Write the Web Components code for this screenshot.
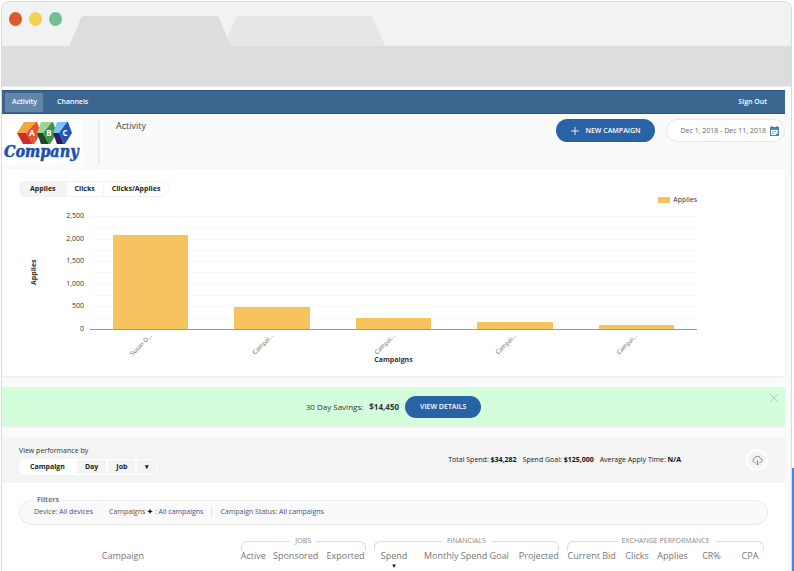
<!DOCTYPE html>
<html lang="en">
<head>
<meta charset="utf-8">
<meta name="viewport" content="width=device-width, initial-scale=1">
<title>Activity</title>
<style>
  html { background: #fff; }
  body {
    margin: 0;
    font: 7px/10px "Open Sans", "Noto Sans", sans-serif;
    color: #333;
    --blue: #2863a7;
    --nav: #3b6690;
    --panel: #fafafa;
    --amber: #f7c35f;
    --link: #3c4f9c;
  }
</style>
</head>
<body>
<browser-window>
  <site-nav></site-nav>
  <page-header></page-header>
  <chart-card></chart-card>
  <savings-banner></savings-banner>
  <performance-panel>
    <filter-bar></filter-bar>
    <results-table></results-table>
  </performance-panel>
</browser-window>
<script>
const define = (name, html) => customElements.define(name, class extends HTMLElement {
  constructor() {
    super();
    this.attachShadow({ mode: "open" }).innerHTML = html;
  }
});

const reset = `
  :host, *, *::before, *::after { box-sizing: border-box; }
  button { font: inherit; color: inherit; background: none; border: 0; margin: 0; padding: 0; cursor: pointer; white-space: nowrap; }
  a { color: inherit; text-decoration: none; }
`;

define("browser-window", `
<style>${reset}
  :host { display: block; position: relative; overflow: hidden; padding: 1px 2px 0 1px; }
  .frame { border: 1px solid #d8dada; border-bottom: 0; border-radius: 8px 8px 0 0; overflow: hidden; min-height: calc(100vh - 1px); background: var(--panel); }
  .strip { height: 44px; background: #f1f3f2; display: flex; align-items: flex-end; }
  .dots { align-self: flex-start; display: flex; gap: 7px; padding: 10px 0 0 7px; width: 67px; }
  .dots i { width: 13px; height: 14px; border-radius: 50%; }
  svg { display: block; width: 316px; height: 31px; }
  .bar { height: 41px; background: #dcddde; border-bottom: 1px solid #eceded; }
  main { display: block; border-top: 3px solid #fff; padding-right: 6px; }
  .edge { position: absolute; right: 0; top: 468px; bottom: 0; width: 2px; background: #4285f0; }
</style>
<div class="frame">
  <div class="strip">
    <div class="dots"><i style="background:#dd5a2b"></i><i style="background:#f0d255"></i><i style="background:#75bd94"></i></div>
    <svg viewBox="0 0 316 31" aria-hidden="true">
      <path d="M158 23 167 3Q168 1 170 1H301Q303 1 304 3L316 31H158Z" fill="#e5e6e5"/>
      <path d="M0 31 12 3Q13 1 15 1H147Q149 1 150 3L162 31Z" fill="#dcddde"/>
    </svg>
  </div>
  <div class="bar"></div>
  <main><slot></slot></main>
</div>
<div class="edge"></div>
`);

define("site-nav", `
<style>${reset}
  :host { display: block; }
  nav { display: flex; align-items: center; height: 24px; padding: 0 3px; gap: 4px; background: var(--nav); border: 1px solid #2c5783; border-left: 0; border-right: 0; color: #fff; font-weight: 600; }
  a { padding: 4px 10px 5px; }
  a[aria-current] { background: #6286aa; padding: 4px 6px 5px 7px; }
  a:last-child { margin-left: auto; padding-right: 15px; }
</style>
<nav><a href="#" aria-current="page">Activity</a><a href="#">Channels</a><a href="#">Sign Out</a></nav>
`);

define("company-logo", `
<style>
  :host { display: block; background: #fff; width: 80px; height: 45px; }
  svg { display: block; width: 100%; height: 100%; }
</style>
<svg viewBox="0 0 80 45" role="img" aria-label="ABC Company">
  <path d="M22 3H34L24 14H15Z" fill="#f3a63c"/><path d="M15 14H24L31 25H21Z" fill="#cc2f27"/><path d="M34 3H35L39 14 32 25H31L24 14Z" fill="#e5562d"/>
  <path d="M39 3H50L41 14H35Z" fill="#9fd393"/><path d="M35 14H41L47 25H39Z" fill="#1d4729"/><path d="M50 3H51L55 14 48 25H47L41 14Z" fill="#3f9547"/>
  <path d="M55 3H65L57 14H51Z" fill="#7dc3ef"/><path d="M51 14H57L62 25H55Z" fill="#2c1d68"/><path d="M65 3H66L70 14 63 25H62L57 14Z" fill="#1d57b5"/>
  <g font-family="Open Sans" font-size="8" font-weight="700" fill="#fff" text-anchor="middle">
    <text x="30" y="17">A</text><text x="47" y="17">B</text><text x="63" y="17">C</text>
  </g>
  <text x="2" y="38" font-family="DejaVu Serif Condensed, DejaVu Serif" font-size="16" font-weight="700" font-style="italic" fill="#1c4fae" stroke="#1c4fae" stroke-width=".5">Company</text>
</svg>
`);

define("page-header", `
<style>${reset}
  :host { display: flex; align-items: flex-start; padding: 5px 0; min-height: 55px; }
  company-logo { flex: none; }
  h1 { margin: 0 auto 0 16px; padding-left: 16px; height: 45px; border-left: 2px solid #ececec; font-size: 9px; line-height: 13px; font-weight: 400; color: #444; }
  .actions { display: flex; gap: 11px; }
  button { height: 23px; border-radius: 12px; display: flex; align-items: center; }
  .new { background: var(--blue); color: #fff; font-weight: 600; padding: 0 15px; gap: 6px; }
  .date { background: #fff; border: 1px solid #e6e6e6; padding: 0 5px 0 13px; gap: 4px; color: #666; }
  svg { display: block; flex: none; }
</style>
<company-logo></company-logo>
<h1>Activity</h1>
<div class="actions">
  <button class="new"><svg width="8" height="8" viewBox="0 0 8 8" stroke="#dfe9f5" aria-hidden="true"><path d="M4 0V8M0 4H8"/></svg>NEW CAMPAIGN</button>
  <button class="date">Dec 1, 2018 - Dec 11, 2018
    <svg width="9" height="10" viewBox="0 0 9 10" aria-hidden="true"><path d="M0 1H9V10H0Z" fill="#4e84b8"/><path d="M2 0V2M7 0V2" stroke="#2863a7"/><path d="M1 4H8V9H1Z" fill="#fff"/><path d="M2 5.500H7.500M1.500 7.500H5" stroke="#6d9ac5" stroke-dasharray="1 .6"/><path d="M5.500 9 8 6.500V9Z" fill="#4e84b8"/></svg>
  </button>
</div>
`);

customElements.define("pill-group", class extends HTMLElement {
  constructor() {
    super();
    this.attachShadow({ mode: "open" });
  }
  connectedCallback() {
    const buttons = this.getAttribute("options").split(",").map((text, i) => `<button aria-pressed="${i === 0}">${text}</button>`).join("");
    this.shadowRoot.innerHTML = `
<style>${reset}
  :host { display: flex; width: fit-content; gap: var(--pill-gap, 1px); padding: 1px; border-radius: 9px; overflow: hidden; background: var(--pill-on, #f3f3f3); }
  button { height: 14px; padding: 0 8px; background: var(--pill-off, #fff); color: #222; font-weight: 700; }
  button[aria-pressed="true"] { padding: 0 10px; background: var(--pill-on, #f3f3f3); }
  button:last-child { border-radius: 0 8px 8px 0; }
</style>${buttons}`;
  }
});

const bars = [["Susan O...", 2090], ["Campai...", 490], ["Campai...", 240], ["Campai...", 165], ["Campai...", 90]];
define("bar-chart", `
<style>${reset}
  :host { display: grid; grid-template-columns: 12px 38px 1fr; column-gap: 6px; padding: 0 88px 0 9px; }
  .legend { grid-column: 3; justify-self: end; display: flex; align-items: center; gap: 3px; height: 6px; }
  .legend i { width: 12px; height: 6px; background: var(--amber); }
  .ytitle { grid-column: 1; margin-top: 8px; writing-mode: vertical-rl; transform: rotate(180deg); text-align: center; font-weight: 700; line-height: 12px; }
  .scale { height: 123px; margin-top: 8px; display: flex; flex-direction: column; justify-content: space-between; text-align: right; }
  .plot { height: 114px; margin-top: 13px; display: flex; align-items: flex-end; border-bottom: 1px solid #999;
    background: repeating-linear-gradient(#f8f8f8 0 1px, transparent 1px 10%); }
  .slot { flex: 1; height: 100%; display: flex; align-items: flex-end; justify-content: center; }
  .slot i { width: 62%; background: var(--amber); }
  .names { grid-column: 3; display: flex; height: 21px; line-height: 2px; font-size: 6px; }
  .names span { flex: 1; padding-right: 10%; text-align: right; }
  .names b { display: inline-block; font-weight: 400; color: #666; transform: rotate(-45deg); transform-origin: 100% 50%; }
  .xtitle { grid-column: 3; text-align: center; font-weight: 700; }
</style>
<div class="legend"><i></i>Applies</div>
<div class="ytitle">Applies</div>
<div class="scale"><span>2,500</span><span>2,000</span><span>1,500</span><span>1,000</span><span>500</span><span>0</span></div>
<div class="plot">${bars.map(([, v]) => `<div class="slot"><i style="height:${v / 25}%"></i></div>`).join("")}</div>
<div class="names">${bars.map(([n]) => `<span><b>${n}</b></span>`).join("")}</div>
<div class="xtitle">Campaigns</div>
`);

define("chart-card", `
<style>${reset}
  :host { display: block; background: #fff; padding: 12px 0 11px 17px; border-radius: 2px; box-shadow: 0 1px 2px #e8e8e8; }
</style>
<pill-group options="Applies,Clicks,Clicks/Applies"></pill-group>
<bar-chart></bar-chart>
`);

define("savings-banner", `
<style>${reset}
  :host { display: flex; align-items: center; justify-content: center; position: relative; height: 39px; margin: 11px 0; background: #d4fddc; border-radius: 2px; box-shadow: 0 1px 2px #e4ebe5; font-size: 8px; gap: 6px; }
  .view { height: 22px; padding: 0 15px; border-radius: 11px; background: var(--blue); color: #fff; font-weight: 600; font-size: 7px; }
  .close { position: absolute; right: 7px; top: 7px; }
  svg { display: block; }
</style>
<span>30 Day Savings:</span><b>$14,450</b><button class="view">VIEW DETAILS</button>
<button class="close" aria-label="Close"><svg width="8" height="8" viewBox="0 0 8 8" stroke="#b5cfba"><path d="M0 0 8 8M8 0 0 8"/></svg></button>
`);

define("performance-panel", `
<style>${reset}
  :host { display: block; background: #fff; min-height: 134px; }
  .head { display: flex; align-items: center; background: #f4f4f4; padding: 8px 17px; min-height: 46px; }
  .label { margin-bottom: 3px; }
  pill-group { --pill-on: #fff; --pill-off: #f4f4f4; --pill-gap: 2px; }
  .totals { display: flex; gap: 6px; margin: 0 65px 0 auto; color: #222; }
  .totals b { color: #111; }
  .cloud { width: 22px; height: 22px; border: 2px solid #fff; border-radius: 50%; display: grid; place-items: center; }
  svg { display: block; }
</style>
<div class="head">
  <div><div class="label">View performance by</div>
    <pill-group options="Campaign,Day,Job,▾"></pill-group></div>
  <div class="totals"><span>Total Spend: <b>$34,282</b></span><span>Spend Goal: <b>$125,000</b></span><span>Average Apply Time: <b>N/A</b></span></div>
  <button class="cloud" aria-label="Download"><svg width="11" height="11" viewBox="0 0 11 11" fill="none" stroke="#888"><path d="M3.500 7.500H2.500A2 2 0 0 1 2.300 3.700 3.200 3.200 0 0 1 8.400 3.200 2.200 2.200 0 0 1 8.500 7.500H7.500M5.500 5V10M4 8.500 5.500 10 7 8.500"/></svg></button>
</div>
<slot></slot>
`);

define("filter-bar", `
<style>${reset}
  :host { display: block; padding: 12px 17px 0; }
  fieldset { margin: 0; padding: 2px 14px 7px; min-width: 0; border: 1px solid #ebebeb; border-radius: 13px; background: var(--panel); color: #555; }
  legend { padding: 0 3px; font-weight: 700; color: #777; }
  .row { display: flex; align-items: center; }
  span + span { margin-left: 16px; }
  .last { border-left: 1px solid #ddd; padding-left: 8px; }
  span.last { margin-left: 8px; }
  a { color: var(--link); }
  b { color: #111; }
</style>
<fieldset><legend>Filters</legend>
  <div class="row"><span>Device: <a href="#">All devices</a></span><span>Campaigns <b>✦</b> : <a href="#">All campaigns</a></span><span class="last">Campaign Status: <a href="#">All campaigns</a></span></div>
</fieldset>
`);

const columns = [["Campaign", 218], ["Active", 33], ["Sponsored", 52], ["Exported", 48], ["Spend", 49], ["Monthly Spend Goal", 96], ["Projected", 49], ["Current Bid", 57], ["Clicks", 34], ["Applies", 37], ["CR%", 41], ["CPA", 36]];
const groups = [["JOBS", 3], ["FINANCIALS", 3], ["EXCHANGE PERFORMANCE", 5]];
define("results-table", `
<style>${reset}
  :host { display: block; padding: 11px 17px 0; color: #777; }
  table { width: 100%; table-layout: fixed; border-collapse: collapse; }
  th { font-weight: 400; padding: 0; white-space: nowrap; vertical-align: top; }
  thead tr:last-child th { font-size: 9px; line-height: 12px; }
  thead tr:last-child th:first-child { padding-right: 10px; }
  .group { display: flex; gap: 5px; padding: 0 4px; height: 14px; color: #888; }
  .group::before, .group::after { content: ""; flex: 1; height: 10px; margin-top: 5px; border-top: 1px solid #ddd; }
  .group::before { border-left: 1px solid #ddd; border-radius: 6px 0 0 0; }
  .group::after { border-right: 1px solid #ddd; border-radius: 0 6px 0 0; }
  .sort { display: block; line-height: 8px; font-size: 6px; color: #111; }
</style>
<table>
  <colgroup>${columns.map(([, w]) => `<col style="width:${(w / 7.5).toFixed(2)}%">`).join("")}</colgroup>
  <thead>
    <tr><td></td>${groups.map(([n, s]) => `<th colspan="${s}" scope="colgroup"><div class="group">${n}</div></th>`).join("")}</tr>
    <tr>${columns.map(([n]) => `<th scope="col">${n}${n === "Spend" ? '<span class="sort">▼</span>' : ""}</th>`).join("")}</tr>
  </thead>
</table>
`);
</script>
</body>
</html>
